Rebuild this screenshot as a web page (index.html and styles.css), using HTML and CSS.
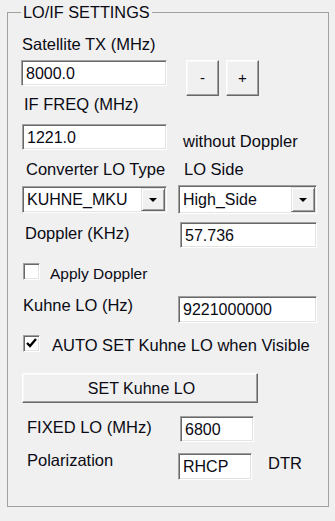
FILE: index.html
```html
<!DOCTYPE html>
<html>
<head>
<meta charset="utf-8">
<link rel="stylesheet" href="styles.css">
</head>
<body>
<div class="page">
  <fieldset class="group">
    <legend class="group-title">LO/IF SETTINGS</legend>

    <div class="lbl l-sat">Satellite TX (MHz)</div>
    <div class="row r-tx">
      <div class="field f-tx">8000.0</div>
      <button class="btn b-minus">-</button>
      <button class="btn b-plus">+</button>
    </div>

    <div class="lbl l-if">IF FREQ (MHz)</div>
    <div class="row r-if">
      <div class="field f-if">1221.0</div>
      <div class="lbl side-wo">without Doppler</div>
    </div>

    <div class="row r-conv">
      <div class="lbl l-conv">Converter LO Type</div>
      <div class="lbl">LO Side</div>
    </div>
    <div class="row r-combo">
      <div class="combo c-type"><span class="combo-text">KUHNE_MKU</span><span class="combo-arrow"><span class="tri"></span></span></div>
      <div class="combo c-side"><span class="combo-text">High_Side</span><span class="combo-arrow"><span class="tri"></span></span></div>
    </div>

    <div class="row r-dop">
      <div class="lbl l-dop">Doppler (KHz)</div>
      <div class="field f-dop">57.736</div>
    </div>

    <div class="row r-chk1">
      <span class="chk chk1"></span>
      <span class="chk-text small">Apply Doppler</span>
    </div>

    <div class="row r-kuhne">
      <div class="lbl l-kuhne">Kuhne LO (Hz)</div>
      <div class="field f-kuhne">9221000000</div>
    </div>

    <div class="row r-chk2">
      <span class="chk chk2"><svg width="15" height="15" viewBox="0 0 15 15"><polyline points="3,7 6,10 12,3" fill="none" stroke="#000" stroke-width="2.4"/></svg></span>
      <span class="chk-text auto">AUTO SET Kuhne LO when Visible</span>
    </div>

    <button class="btn btn-set">SET Kuhne LO</button>

    <div class="row r-fixed">
      <div class="lbl l-fixed">FIXED LO (MHz)</div>
      <div class="field f-fixed">6800</div>
    </div>

    <div class="row r-pol">
      <div class="lbl l-pol">Polarization</div>
      <div class="field f-pol">RHCP</div>
      <div class="lbl l-dtr">DTR</div>
    </div>
  </fieldset>
</div>
</body>
</html>
```

FILE: styles.css
```css
html, body {
  margin: 0;
  background: #f0f0f0;
}
body {
  font-family: "Liberation Sans", Arial, sans-serif;
  font-size: 16px;
  line-height: 18px;
  color: #0a0a14;
}
.page {
  padding: 3px 0 0 7px;
}
.group {
  margin: 0;
  width: 322px;
  min-width: 0;
  box-sizing: border-box;
  border: 1px solid #a0a0a0;
  padding: 14px 0 26px 13px;
}
.group-title {
  padding: 0 2px;
  font-size: 16.3px;
  line-height: 18px;
}
.lbl {
  display: block;
  white-space: nowrap;
  font-size: 16.5px;
}
.row {
  display: flex;
  align-items: flex-start;
}

/* sunken text field */
.field {
  box-sizing: border-box;
  height: 26px;
  background: #fff;
  border: 1px solid;
  border-color: #a0a0a0 #ffffff #ffffff #a0a0a0;
  box-shadow: inset 1px 1px 0 #696969, inset -1px -1px 0 #e3e3e3;
  padding: 4px 3px 0 4px;
  line-height: 18px;
  font-size: 16px;
  white-space: nowrap;
  overflow: hidden;
}

/* raised button */
.btn {
  box-sizing: border-box;
  margin: 0;
  padding: 0;
  background: #f0f0f0;
  border: 1px solid;
  border-color: #ffffff #696969 #696969 #ffffff;
  box-shadow: inset -1px -1px 0 #a0a0a0, inset 1px 1px 0 #f8f8f8;
  font-family: "Liberation Sans", Arial, sans-serif;
  color: #0a0a14;
  border-radius: 0;
}

.l-sat { margin-left: 1px; }
.r-tx { margin-top: 7px; height: 26px; }
.f-tx { width: 146px; }
.b-minus, .b-plus {
  width: 33px;
  height: 36px;
  font-size: 15px;
  line-height: 16px;
  flex: none;
}
.b-minus { margin-left: 19px; }
.b-plus { margin-left: 7px; }

.l-if { margin: 9px 0 0 3px; }
.r-if { margin-top: 11px; }
.f-if { width: 145px; margin-left: 1px; }
.side-wo { margin-left: 16px; padding-top: 8px; }

.r-conv { margin-top: 10px; }
.l-conv { margin-left: 5px; width: 158px; }

.r-combo { margin-top: 7px; }
.combo {
  box-sizing: border-box;
  display: flex;
  background: #fff;
  border: 1px solid;
  border-color: #a0a0a0 #ffffff #ffffff #a0a0a0;
  box-shadow: inset 1px 1px 0 #696969, inset -1px -1px 0 #e3e3e3;
  padding: 1px;
}
.combo-text {
  flex: 1;
  padding: 3px 0 0 3px;
  line-height: 18px;
  font-size: 16px;
  white-space: nowrap;
}
.combo-arrow {
  box-sizing: border-box;
  width: 24px;
  flex: none;
  display: flex;
  align-items: center;
  justify-content: center;
  background: #f0f0f0;
  border: 1px solid;
  border-color: #e3e3e3 #696969 #696969 #e3e3e3;
  box-shadow: inset 1px 1px 0 #ffffff, inset -1px -1px 0 #a0a0a0;
}
.tri {
  width: 0;
  height: 0;
  border-left: 4px solid transparent;
  border-right: 4px solid transparent;
  border-top: 4px solid #000;
  margin-top: 1px;
}
.c-type { width: 145px; height: 27px; margin: 1px 0 0 1px; }
.c-side { width: 139px; height: 29px; margin-left: 11px; }
.c-side .combo-text { padding-top: 4px; }

.r-dop { margin-top: 8px; }
.l-dop { margin-left: 4px; width: 155px; padding-top: 2px; }
.f-dop { width: 137px; }

.chk {
  box-sizing: border-box;
  width: 17px;
  height: 17px;
  flex: none;
  background: #fff;
  border: 1px solid;
  border-color: #a0a0a0 #ffffff #ffffff #a0a0a0;
  box-shadow: inset 1px 1px 0 #696969, inset -1px -1px 0 #e3e3e3;
  display: flex;
}
.chk svg { display: block; }
.r-chk1 { margin-top: 15px; }
.chk1 { margin-left: 2px; }
.small {
  font-size: 15.5px;
  line-height: 17px;
  margin-left: 10px;
  padding-top: 2px;
}
.r-kuhne { margin-top: 14px; }
.l-kuhne { margin-left: 2px; width: 155px; }
.f-kuhne { width: 139px; height: 27px; }

.r-chk2 { margin-top: 12px; }
.chk2 { margin-left: 2px; }
.auto { margin-left: 12px; padding-top: 1px; font-size: 16.5px; }

.btn-set {
  display: block;
  margin: 19px 0 0 1px;
  width: 236px;
  height: 30px;
  font-size: 16px;
  line-height: 17px;
  padding-left: 3px;
}

.r-fixed { margin-top: 13px; }
.l-fixed { margin-left: 6px; width: 153px; padding-top: 2px; }
.f-fixed { width: 74px; }

.r-pol { margin-top: 9px; }
.l-pol { margin-left: 6px; width: 151px; }
.f-pol { width: 74px; height: 27px; margin-top: 2px; }
.l-dtr { margin-left: 16px; padding-top: 3px; }
```
